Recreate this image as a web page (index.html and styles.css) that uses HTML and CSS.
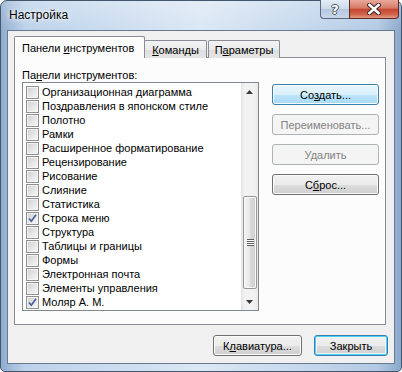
FILE: index.html
```html
<!DOCTYPE html>
<html>
<head>
    <meta charset="utf-8">
    <title>Настройка</title>
    <link rel="stylesheet" href="styles.css">
</head>
<body>
    <div class="window">
        <div class="titlebar">
            <span class="title">Настройка</span>
            <div class="caption-buttons">
                <div class="cap-btn help">?</div>
                <div class="cap-btn close">
                    <svg width="14" height="12" viewBox="0 0 14 12">
                        <path d="M2.5 2 L11.5 10 M11.5 2 L2.5 10" stroke="#3b2a28" stroke-width="4.6" stroke-linecap="square"/>
                        <path d="M2.5 2 L11.5 10 M11.5 2 L2.5 10" stroke="#ffffff" stroke-width="2.6" stroke-linecap="square"/>
                    </svg>
                </div>
            </div>
        </div>

        <div class="client">
            <!-- tab strip -->
            <div class="tabs">
                <div class="tab active"><span>Панели <u>и</u>нструментов</span></div>
                <div class="tab tab-commands"><span><u>К</u>оманды</span></div>
                <div class="tab tab-params"><span>П<u>а</u>раметры</span></div>
            </div>

            <div class="tab-page">
                <div class="toolbars">
                    <div class="list-label">Па<u>н</u>ели инструментов:</div>
                    <div class="listbox">
                        <div class="items">
                            <div class="row"><span class="check"></span>Организационная диаграмма</div>
                            <div class="row"><span class="check"></span>Поздравления в японском стиле</div>
                            <div class="row"><span class="check"></span>Полотно</div>
                            <div class="row"><span class="check"></span>Рамки</div>
                            <div class="row"><span class="check"></span>Расширенное форматирование</div>
                            <div class="row"><span class="check"></span>Рецензирование</div>
                            <div class="row"><span class="check"></span>Рисование</div>
                            <div class="row"><span class="check"></span>Слияние</div>
                            <div class="row"><span class="check"></span>Статистика</div>
                            <div class="row"><span class="check checked"><svg width="11" height="11" viewBox="0 0 11 11"><path d="M2 5.5 L4.3 8.2 L9 1.8" fill="none" stroke="#4a5f96" stroke-width="1.7"/></svg></span>Строка меню</div>
                            <div class="row"><span class="check"></span>Структура</div>
                            <div class="row"><span class="check"></span>Таблицы и границы</div>
                            <div class="row"><span class="check"></span>Формы</div>
                            <div class="row"><span class="check"></span>Электронная почта</div>
                            <div class="row"><span class="check"></span>Элементы управления</div>
                            <div class="row"><span class="check checked"><svg width="11" height="11" viewBox="0 0 11 11"><path d="M2 5.5 L4.3 8.2 L9 1.8" fill="none" stroke="#4a5f96" stroke-width="1.7"/></svg></span>Моляр А. М.</div>
                        </div>
                        <div class="scrollbar">
                            <div class="arrow">
                                <svg width="7" height="4" viewBox="0 0 7 4"><path d="M3.5 0 L7 4 L0 4 Z" fill="#3a3a3a"/></svg>
                            </div>
                            <div class="track">
                                <div class="thumb">
                                    <span class="grip"></span>
                                </div>
                            </div>
                            <div class="arrow">
                                <svg width="7" height="4" viewBox="0 0 7 4"><path d="M0 0 L7 0 L3.5 4 Z" fill="#3a3a3a"/></svg>
                            </div>
                        </div>
                    </div>
                </div>

                <div class="side-buttons">
                    <div class="btn btn-hot"><span>Со<u>з</u>дать...</span></div>
                    <div class="btn btn-disabled"><span>Переименовать...</span></div>
                    <div class="btn btn-disabled"><span>Удалить</span></div>
                    <div class="btn"><span>С<u>б</u>рос...</span></div>
                </div>
            </div>

            <div class="footer">
                <div class="btn btn-keyboard"><span>К<u>л</u>авиатура...</span></div>
                <div class="btn btn-default btn-close"><span>Закрыть</span></div>
            </div>
        </div>
    </div>
</body>
</html>
```

FILE: styles.css
```css
body {
    margin: 0;
    background: #ffffff;
    font-family: "Liberation Sans", Arial, sans-serif;
    font-size: 11px;
    color: #000000;
}

u {
    text-decoration: underline;
    text-underline-offset: 1px;
}

/* window frame */

.window {
    width: 402px;
    height: 372px;
    box-sizing: border-box;
    border: 1px solid #44566c;
    border-radius: 7px 7px 5px 5px;
    padding: 0 6px 7px 6px;
    display: flex;
    flex-direction: column;
    background:
        linear-gradient(180deg, rgba(255, 255, 255, 0.25) 0, rgba(255, 255, 255, 0) 30px),
        linear-gradient(90deg, #8faccf 0%, #bcd2ea 6%, #c9dbef 25%, #dbe7f4 50%, #c5d8ed 75%, #b3cae4 94%, #8aa8cc 100%);
}

.titlebar {
    height: 29px;
    display: flex;
    align-items: flex-start;
    padding-left: 2px;
}

.title {
    font-size: 12px;
    line-height: 29px;
    color: #000000;
    text-shadow: 0 0 6px #ffffff, 0 0 3px #ffffff;
}

.caption-buttons {
    margin-left: auto;
    margin-right: -4px;
    margin-top: -1px;
    display: flex;
}

.cap-btn {
    height: 19px;
    box-sizing: border-box;
    border: 1px solid #5a6a7e;
    border-top: none;
    display: flex;
    align-items: center;
    justify-content: center;
}

.help {
    width: 29px;
    border-radius: 0 0 0 4px;
    border-right: none;
    background: linear-gradient(180deg, #e4edf7 0%, #cbdaeb 50%, #b5c8df 52%, #c7d7ea 100%);
    color: #ffffff;
    font-family: "DejaVu Sans", sans-serif;
    font-weight: bold;
    font-size: 13px;
    text-shadow: -1px 0 #4c5561, 1px 0 #4c5561, 0 -1px #4c5561, 0 1px #4c5561;
}

.close {
    width: 50px;
    border-color: #5e2a22;
    border-radius: 0 0 4px 0;
    background: linear-gradient(180deg, #e9a99c 0%, #d67a68 45%, #c54530 52%, #d0634c 80%, #e39b82 100%);
}

/* client area */

.client {
    flex: 1;
    display: flex;
    flex-direction: column;
    border: 1px solid #687a90;
    background: #f0f0f0;
}

.tabs {
    display: flex;
    align-items: flex-end;
    height: 21px;
    margin: 6px 0 -1px 6px;
    position: relative;
    z-index: 1;
}

.tab {
    height: 18px;
    box-sizing: border-box;
    border: 1px solid #898c95;
    border-bottom: none;
    border-radius: 2px 2px 0 0;
    background: linear-gradient(180deg, #f3f3f3 0%, #ebebeb 50%, #dddddd 51%, #e6e6e6 100%);
    display: flex;
    align-items: center;
    justify-content: center;
    padding-top: 1px;
}

.tab.active {
    width: 131px;
    height: 22px;
    background: #fcfcfc;
    justify-content: flex-start;
    padding-left: 7px;
    padding-top: 0;
    position: relative;
    z-index: 2;
}

.tab-commands {
    width: 63px;
    margin-left: -1px;
}

.tab-params {
    width: 72px;
    margin-left: 1px;
}

.tab-page {
    width: 372px;
    height: 268px;
    box-sizing: border-box;
    margin-left: 6px;
    border: 1px solid #898c95;
    background: #fcfcfc;
    display: flex;
    padding: 10px 0 0 7px;
}

.list-label {
    line-height: 14px;
    height: 14px;
}

.listbox {
    width: 237px;
    height: 229px;
    box-sizing: border-box;
    border: 1px solid #828790;
    background: #ffffff;
    display: flex;
}

.items {
    flex: 1;
    padding-top: 2px;
}

.row {
    height: 14px;
    display: flex;
    align-items: center;
    padding-left: 3px;
    white-space: nowrap;
}

.check {
    width: 13px;
    height: 13px;
    box-sizing: border-box;
    border: 1px solid #8f8f8f;
    margin-right: 3px;
    background: linear-gradient(135deg, #cfcfcf 0%, #e9e9e9 60%, #f7f7f7 100%);
    box-shadow: inset 0 0 0 1px #f4f4f4;
    display: flex;
    align-items: center;
    justify-content: center;
}

/* scrollbar */

.scrollbar {
    width: 17px;
    display: flex;
    flex-direction: column;
    background: linear-gradient(90deg, #e3e3e3 0%, #f2f2f2 20%, #f2f2f2 80%, #e8e8e8 100%);
}

.arrow {
    height: 17px;
    display: flex;
    align-items: center;
    justify-content: center;
}

.track {
    flex: 1;
}

.thumb {
    margin: 96px 1px 0 2px;
    height: 93px;
    box-sizing: border-box;
    border: 1px solid #979797;
    border-radius: 2px;
    background: linear-gradient(90deg, #f3f3f3 0%, #e9e9e9 45%, #d8d8d8 55%, #cfcfcf 100%);
    box-shadow: inset 0 0 0 1px #f8f8f8;
    display: flex;
    align-items: center;
    justify-content: center;
}

.grip {
    width: 7px;
    height: 7px;
    background: repeating-linear-gradient(180deg, #5f5f5f 0, #5f5f5f 1px, #ffffff 1px, #ffffff 2px);
}

/* buttons */

.side-buttons {
    margin: 16px 0 0 13px;
    display: flex;
    flex-direction: column;
    gap: 9px;
}

.btn {
    width: 107px;
    height: 21px;
    box-sizing: border-box;
    border: 1px solid #707070;
    border-radius: 3px;
    background: linear-gradient(180deg, #f2f2f2 0%, #ebebeb 50%, #dddddd 51%, #cfcfcf 100%);
    box-shadow: inset 0 0 0 1px #fbfbfb;
    display: flex;
    align-items: center;
    justify-content: center;
}

.btn-hot {
    border-color: #3c7fb1;
    background: linear-gradient(180deg, #eaf6fd 0%, #d9f0fc 50%, #bee6fd 51%, #a7d9f5 100%);
}

.btn-disabled {
    border-color: #adb2b5;
    background: #f4f4f4;
    box-shadow: none;
    color: #838383;
}

.footer {
    display: flex;
    justify-content: flex-end;
    gap: 12px;
    margin: 10px 6px 0 0;
}

.btn-keyboard {
    width: 89px;
}

.btn-close {
    width: 74px;
}

.btn-default {
    border-color: #3c7fb1;
    box-shadow: inset 0 0 0 1px #48d0f8, inset 0 0 0 2px #f4f4f4;
}
```
